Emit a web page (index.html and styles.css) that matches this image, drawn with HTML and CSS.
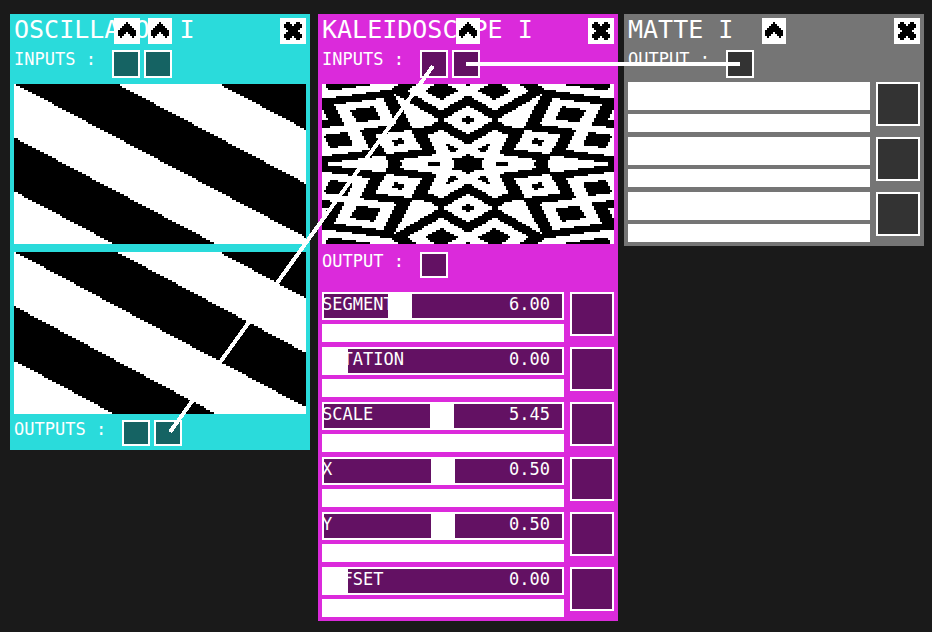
FILE: index.html
```html
<!DOCTYPE html>
<html lang="en">
<head>
<meta charset="utf-8">
<title>Video patch</title>
<link rel="stylesheet" href="styles.css">
</head>
<body>
<svg class="defs" aria-hidden="true">
  <symbol id="up" viewBox="0 0 9 9"><path d="M4 0h1v1h1v1h1v1h1v1h1v3h-1v1h-1v-1h-1v-1h-1v-1h-1v1h-1v1h-1v1h-1v-1h-1v-3h1v-1h1v-1h1v-1h1z"/></symbol>
  <symbol id="close" viewBox="0 0 9 9"><path d="M1 0h2v1h1v1h1v-1h1v-1h2v1h1v2h-1v1h-1v1h1v1h1v2h-1v1h-2v-1h-1v-1h-1v1h-1v1h-2v-1h-1v-2h1v-1h1v-1h-1v-1h-1v-2h1z"/></symbol>
</svg>
<main class="patch">
  <section class="node oscillator">
    <header class="head">
      <h2>OSCILLATOR I</h2>
      <button class="icon up-alt" aria-label="Move up"><svg><use href="#up"/></svg></button>
      <button class="icon up" aria-label="Raise"><svg><use href="#up"/></svg></button>
      <button class="icon close" aria-label="Close"><svg><use href="#close"/></svg></button>
    </header>
    <div class="ports"><span class="name">INPUTS :</span><button class="port" aria-label="Input 1"></button><button class="port" aria-label="Input 2"></button></div>
    <canvas class="screen" width="146" height="80" data-pattern="stripes"></canvas>
    <canvas class="screen second" width="146" height="81" data-pattern="stripes"></canvas>
    <div class="ports out"><span class="name wide">OUTPUTS :</span><button class="port" aria-label="Output 1"></button><button class="port" aria-label="Output 2"></button></div>
  </section>

  <section class="node kaleidoscope">
    <header class="head">
      <h2>KALEIDOSCOPE I</h2>
      <button class="icon up" aria-label="Raise"><svg><use href="#up"/></svg></button>
      <button class="icon close" aria-label="Close"><svg><use href="#close"/></svg></button>
    </header>
    <div class="ports"><span class="name">INPUTS :</span><button class="port" aria-label="Input 1"></button><button class="port" aria-label="Input 2"></button></div>
    <canvas class="screen" width="146" height="80" data-pattern="kaleidoscope"></canvas>
    <div class="ports single"><span class="name">OUTPUT :</span><button class="port" aria-label="Output"></button></div>
    <div class="params">
      <div class="param">
        <div class="slider"><input id="segment" type="range" min="0" max="20" step="0.01" value="6"><label for="segment">SEGMENT</label><output for="segment">6.00</output></div>
        <input class="entry" type="text" aria-label="Segment source"><button class="pad" aria-label="Map segment"></button>
      </div>
      <div class="param">
        <div class="slider"><input id="rotation" type="range" min="0" max="1" step="0.01" value="0"><label for="rotation">ROTATION</label><output for="rotation">0.00</output></div>
        <input class="entry" type="text" aria-label="Rotation source"><button class="pad" aria-label="Map rotation"></button>
      </div>
      <div class="param">
        <div class="slider"><input id="scale" type="range" min="0" max="11" step="0.01" value="5.45"><label for="scale">SCALE</label><output for="scale">5.45</output></div>
        <input class="entry" type="text" aria-label="Scale source"><button class="pad" aria-label="Map scale"></button>
      </div>
      <div class="param">
        <div class="slider"><input id="x" type="range" min="0" max="1" step="0.01" value="0.5"><label for="x">X</label><output for="x">0.50</output></div>
        <input class="entry" type="text" aria-label="X source"><button class="pad" aria-label="Map X"></button>
      </div>
      <div class="param">
        <div class="slider"><input id="y" type="range" min="0" max="1" step="0.01" value="0.5"><label for="y">Y</label><output for="y">0.50</output></div>
        <input class="entry" type="text" aria-label="Y source"><button class="pad" aria-label="Map Y"></button>
      </div>
      <div class="param">
        <div class="slider"><input id="offset" type="range" min="0" max="1" step="0.01" value="0"><label for="offset">OFFSET</label><output for="offset">0.00</output></div>
        <input class="entry" type="text" aria-label="Offset source"><button class="pad" aria-label="Map offset"></button>
      </div>
    </div>
  </section>

  <section class="node matte">
    <header class="head">
      <h2>MATTE I</h2>
      <button class="icon up" aria-label="Raise"><svg><use href="#up"/></svg></button>
      <button class="icon close" aria-label="Close"><svg><use href="#close"/></svg></button>
    </header>
    <div class="ports"><span class="name">OUTPUT :</span><button class="port" aria-label="Output"></button></div>
    <div class="params">
      <div class="param"><div class="slider"><input type="range" aria-label="Red"></div><input class="entry" type="text" aria-label="Red source"><button class="pad" aria-label="Map red"></button></div>
      <div class="param"><div class="slider"><input type="range" aria-label="Green"></div><input class="entry" type="text" aria-label="Green source"><button class="pad" aria-label="Map green"></button></div>
      <div class="param"><div class="slider"><input type="range" aria-label="Blue"></div><input class="entry" type="text" aria-label="Blue source"><button class="pad" aria-label="Map blue"></button></div>
    </div>
  </section>

  <svg class="wires" aria-hidden="true">
    <path d="M170 432L433 66M466 64H740"/>
  </svg>
</main>
<script src="patterns.js"></script>
</body>
</html>
```
FILE: styles.css
```css
* { box-sizing: border-box; }

body {
  margin: 0;
  background: #1a1a1a;
  color: #fff;
  font: 17px/20px "DejaVu Sans Mono", monospace;
}

button, input { margin: 0; padding: 0; border: 0; border-radius: 0; font: inherit; color: inherit; }
.defs { position: absolute; width: 0; height: 0; }

/* Free canvas on which the nodes are placed */
.patch { position: relative; min-height: 100vh; overflow: hidden; }

.node {
  position: absolute;
  top: 14px;
  width: 300px;
  padding: 4px;
  background: var(--face);
}
.oscillator { left: 10px; --face: #2adbdb; --well: #156363; }
.kaleidoscope { left: 318px; --face: #db2adb; --well: #631163; }
.matte { left: 624px; --face: #757575; --well: #333; }

.head { position: relative; height: 32px; }
h2 { margin: 0; font-size: 25px; line-height: 24px; font-weight: 400; white-space: pre; }

.icon {
  position: absolute;
  top: 0;
  display: grid;
  place-items: center;
  width: 24px;
  height: 26px;
  background: #fff;
}
.icon svg { width: 18px; height: 18px; fill: #000; shape-rendering: crispEdges; }
.up { left: 134px; }
.up-alt { left: 100px; width: 26px; }
.close { right: 0; width: 26px; }

.ports { display: flex; gap: 4px; height: 34px; }
.name { width: 94px; line-height: 18px; white-space: pre; }
.wide { width: 104px; }
.port { width: 28px; height: 28px; border: 2px solid #fff; background: var(--well); }
.out { height: 26px; margin-top: 6px; }
.single { height: 40px; margin-top: 8px; }
.out .port, .single .port { height: 26px; }
.matte .ports { height: 32px; }

.screen { display: block; width: 100%; image-rendering: pixelated; }
.second { margin-top: 8px; }

.params { display: grid; gap: 5px; }
.param {
  display: grid;
  grid-template-columns: 1fr 44px;
  grid-template-rows: 28px 18px;
  gap: 4px 6px;
}
.slider { position: relative; }
.slider input {
  display: block;
  width: 100%;
  height: 28px;
  border: 2px solid #fff;
  background: var(--well);
  appearance: none;
}
.slider input::-webkit-slider-thumb { appearance: none; width: 24px; height: 24px; background: #fff; }
.slider input::-moz-range-thumb { width: 24px; height: 24px; border: 0; border-radius: 0; background: #fff; }
.matte .slider input { background: #fff; }
.slider label, .slider output { position: absolute; top: 2px; pointer-events: none; }
.slider label { left: 0; }
.slider output { right: 14px; }
.entry { grid-area: 2 / 1; width: 100%; background: #fff; color: #000; }
.pad { grid-area: 1 / 2 / 3 / 3; height: 44px; border: 2px solid #fff; background: var(--well); }

.wires { position: absolute; inset: 0; width: 100%; height: 100%; pointer-events: none; }
.wires path { fill: none; stroke: #fff; stroke-width: 4; shape-rendering: crispEdges; }
```
FILE: patterns.js
```javascript
// Diagonal square wave; u and v run from 0 to 1 over the texture.
function wave(u, v, phase = 0.005) {
  const f = 1.485 * v - 1.43 * u + phase;
  return f - Math.floor(f) < 0.5;
}

// Repeats a texture coordinate, with every second tile mirrored.
function mirror(t) {
  const m = ((t % 2) + 2) % 2;
  return m > 1 ? 2 - m : m;
}

// Folds the plane into six mirrored segments before sampling the wave.
function kaleidoscope(u, v) {
  const x = u - 0.5, y = v - 0.5, wedge = Math.PI / 3, scale = 5.45;
  const r = Math.hypot(x, y) * scale;
  let a = Math.atan2(y, x) + 2 * Math.PI;
  a = Math.abs((a % wedge) - wedge / 2);
  return wave(mirror(0.5 + r * Math.cos(a)), mirror(0.5 - r * Math.sin(a)), -0.037);
}

const patterns = { stripes: (u, v) => wave(u, v), kaleidoscope };

for (const canvas of document.querySelectorAll("canvas")) {
  const ctx = canvas.getContext("2d");
  const pattern = patterns[canvas.dataset.pattern];
  for (let y = 0; y < canvas.height; y++) {
    for (let x = 0; x < canvas.width; x++) {
      ctx.fillStyle = pattern((x + 0.5) / canvas.width, (y + 0.5) / canvas.height) ? "#fff" : "#000";
      ctx.fillRect(x, y, 1, 1);
    }
  }
}
```
